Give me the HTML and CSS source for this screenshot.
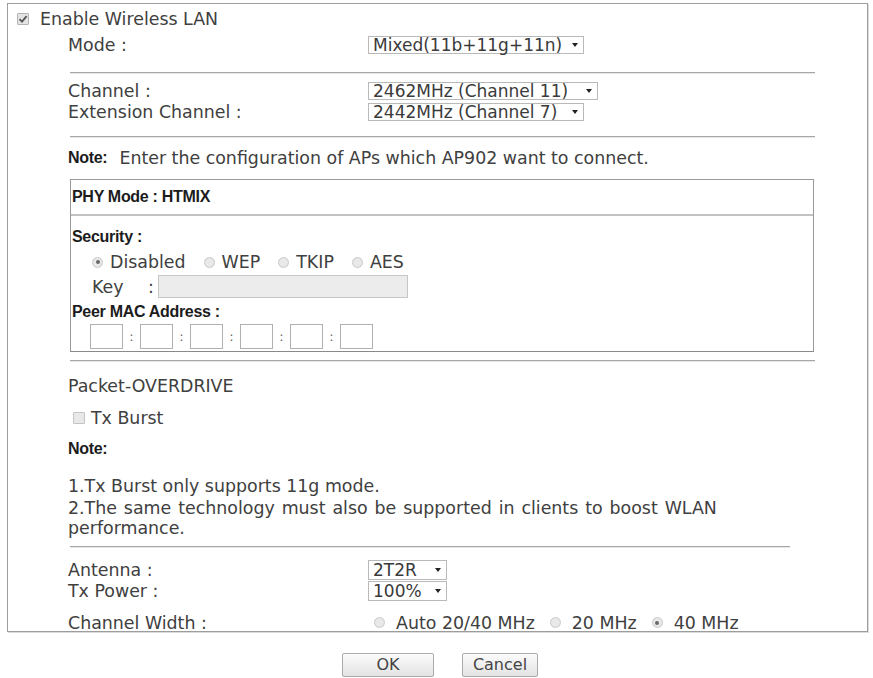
FILE: index.html
```html
<!DOCTYPE html>
<html>
<head>
<meta charset="utf-8">
<link rel="stylesheet" href="styles.css">
</head>
<body>
<div class="panel">
  <div class="enable">
    <span class="cb cb-on"><svg viewBox="0 0 12 12" width="12" height="12"><path d="M2.5 6.2 L5 8.6 L9.6 3.2" fill="none" stroke="#555" stroke-width="1.8"/></svg></span>
    <span>Enable Wireless LAN</span>
  </div>
  <div class="content">
    <div class="row row-mode"><span class="label">Mode :</span><span class="sel w-mode">Mixed(11b+11g+11n)<i class="arr"></i></span></div>
    <div class="hr hr-1"></div>
    <div class="row"><span class="label">Channel :</span><span class="sel w-ch">2462MHz (Channel 11)<i class="arr"></i></span></div>
    <div class="row"><span class="label">Extension Channel :</span><span class="sel w-ext">2442MHz (Channel 7)<i class="arr"></i></span></div>
    <div class="hr hr-2"></div>
    <div class="row note-row"><b class="bold">Note:</b><span class="note-text">Enter the configuration of APs which AP902 want to connect.</span></div>

    <div class="phy">
      <div class="phy-head"><b class="bold">PHY Mode : HTMIX</b></div>
      <div class="phy-body">
        <div class="sec-title"><b class="bold">Security :</b></div>
        <div class="radios">
          <span class="opt"><span class="rb rb-on"></span>Disabled</span>
          <span class="opt"><span class="rb"></span>WEP</span>
          <span class="opt"><span class="rb"></span>TKIP</span>
          <span class="opt"><span class="rb"></span>AES</span>
        </div>
        <div class="key-row"><span class="key-label">Key</span><span class="key-colon">:</span><span class="key-input"></span></div>
        <div class="peer-title"><b class="bold">Peer MAC Address :</b></div>
        <div class="mac-row">
          <span class="mac"></span><span class="mac-colon">:</span>
          <span class="mac"></span><span class="mac-colon">:</span>
          <span class="mac"></span><span class="mac-colon">:</span>
          <span class="mac"></span><span class="mac-colon">:</span>
          <span class="mac"></span><span class="mac-colon">:</span>
          <span class="mac"></span>
        </div>
      </div>
    </div>

    <div class="hr hr-3"></div>
    <div class="row pkt">Packet-OVERDRIVE</div>
    <div class="row burst"><span class="cb cb-off"></span>Tx Burst</div>
    <div class="row note2"><b class="bold">Note:</b></div>
    <div class="row item1">1.Tx Burst only supports 11g mode.</div>
    <div class="item2">2.The same technology must also be supported in clients to boost WLAN performance.</div>
    <div class="hr hr-4"></div>
    <div class="row ant"><span class="label">Antenna :</span><span class="sel w-small">2T2R<i class="arr"></i></span></div>
    <div class="row pow"><span class="label">Tx Power :</span><span class="sel w-small">100%<i class="arr"></i></span></div>
    <div class="row cw">
      <span class="label cw-label">Channel Width :</span>
      <span class="opt2"><span class="rb"></span>Auto 20/40 MHz</span>
      <span class="opt2"><span class="rb"></span>20 MHz</span>
      <span class="opt2"><span class="rb rb-on"></span>40 MHz</span>
    </div>
  </div>
</div>
<div class="buttons">
  <button class="btn btn-ok">OK</button>
  <button class="btn btn-cancel">Cancel</button>
</div>
</body>
</html>
```

FILE: styles.css
```css
html, body {
  margin: 0;
  padding: 0;
  background: #ffffff;
}
body {
  font-family: "DejaVu Sans", Verdana, sans-serif;
  font-size: 17.4px;
  color: #404040;
  width: 873px;
  height: 678px;
  overflow: hidden;
}
.bold {
  font-family: "Liberation Sans", Arial, sans-serif;
  font-weight: bold;
  font-size: 16px;
  color: #1c1c1c;
  letter-spacing: -0.3px;
}
.panel {
  margin: 3px 0 0 7px;
  width: 861px;
  height: 629px;
  box-sizing: border-box;
  border: 1px solid #9d9d9d;
  box-shadow: 1px 1px 0 #dcdcdc;
}
.enable {
  display: flex;
  align-items: center;
  height: 21px;
  margin-top: 4px;
  padding-left: 9px;
}
.cb {
  display: inline-block;
  width: 12px;
  height: 12px;
  box-sizing: border-box;
  border: 1px solid #b4b4b4;
  background: #e4e4e4;
  border-radius: 1px;
  flex: none;
}
.cb svg { display: block; margin: -1px; }
.cb-on { margin-right: 11px; }
.cb-off { margin-right: 6px; background: #e8e8e8; border-color: #c4c4c4; }
.content {
  padding-left: 60px;
  width: 747px;
}
.row {
  display: flex;
  align-items: center;
  height: 21px;
  white-space: nowrap;
}
.label {
  width: 300px;
  flex: none;
}
.row-mode { margin-top: 5px; }
.sel {
  display: inline-flex;
  align-items: center;
  justify-content: space-between;
  box-sizing: border-box;
  height: 18px;
  padding: 0 5px 0 4px;
  border: 1px solid #b9b9b9;
  background: #fff;
  line-height: 16px;
  font-size: 17px;
  color: #3a3a3a;
}
.arr {
  display: inline-block;
  width: 0;
  height: 0;
  border-left: 3px solid transparent;
  border-right: 3px solid transparent;
  border-top: 4px solid #222;
  margin-left: 8px;
}
.w-mode { width: 216px; }
.w-ch { width: 230px; }
.w-ext { width: 216px; }
.w-small { width: 79px; height: 20px; }
.hr {
  margin-left: 2px;
  width: 745px;
  height: 1px;
  border-top: 1px solid #a8a8a8;
  background: #e6e6e6;
}
.hr-1 { margin-top: 17px; margin-bottom: 6px; }
.hr-2 { margin-top: 14px; }
.note-row { margin-top: 9px; }
.note-text { margin-left: 12px; }
.phy {
  margin: 11px 0 0 2px;
  width: 744px;
  height: 173px;
  box-sizing: border-box;
  border: 1px solid #999;
  border-bottom-color: #8a8a8a;
}
.phy-head {
  height: 34px;
  display: flex;
  align-items: center;
  padding-left: 1px;
  border-bottom: 2px solid #c2c2c2;
}
.sec-title {
  margin-top: 10px;
  height: 21px;
  display: flex;
  align-items: center;
  padding-left: 1px;
}
.radios {
  margin-top: 5px;
  height: 20px;
  display: flex;
  align-items: center;
  padding-left: 21px;
}
.opt {
  display: inline-flex;
  align-items: center;
  margin-right: 18px;
}
.rb {
  display: inline-block;
  width: 11px;
  height: 11px;
  box-sizing: border-box;
  border-radius: 50%;
  border: 1px solid #c9c9c9;
  background: radial-gradient(circle, #e9e9e9 0 55%, #dadada 100%);
  margin-right: 7px;
  position: relative;
  flex: none;
}
.rb-on::after {
  content: "";
  position: absolute;
  left: 2.5px;
  top: 2.5px;
  width: 4px;
  height: 4px;
  border-radius: 50%;
  background: #6a6a6a;
}
.key-row {
  margin-top: 2px;
  height: 25px;
  display: flex;
  align-items: center;
  padding-left: 21px;
}
.key-label { width: 56px; }
.key-colon { width: 10px; }
.key-input {
  display: inline-block;
  width: 250px;
  height: 23px;
  box-sizing: border-box;
  border: 1px solid #c6c6c6;
  background: #ececec;
}
.peer-title {
  margin-top: 3px;
  height: 20px;
  display: flex;
  align-items: center;
  padding-left: 1px;
}
.mac-row {
  margin-top: 1px;
  height: 27px;
  display: flex;
  align-items: center;
  padding-left: 19px;
}
.mac {
  display: inline-block;
  width: 33px;
  height: 25px;
  box-sizing: border-box;
  border: 1px solid #b0b0b0;
  background: #fff;
}
.mac-colon {
  width: 17px;
  text-align: center;
  font-size: 13px;
  color: #666;
}
.hr-3 { margin-top: 8px; }
.pkt { margin-top: 13px; }
.burst { margin-top: 11px; padding-left: 5px; }
.note2 { margin-top: 10px; }
.item1 { margin-top: 16px; }
.item2 {
  margin-top: 2px;
  line-height: 20px;
  width: 700px;
  word-spacing: 1.4px;
}
.hr-4 { margin-top: 8px; width: 720px; }
.ant { margin-top: 11px; }
.cw { margin-top: 11px; }
.cw-label { width: 306px; }
.opt2 {
  display: inline-flex;
  align-items: center;
  margin-right: 15px;
}
.opt2 .rb { margin-right: 11px; }
.buttons {
  display: flex;
  justify-content: center;
  gap: 28px;
  margin-top: 21px;
  padding-left: 7px;
}
.btn {
  height: 24px;
  box-sizing: border-box;
  border: 1px solid #ababab;
  border-radius: 2px;
  background: linear-gradient(#fbfbfb, #e3e3e3);
  font-family: "DejaVu Sans", Verdana, sans-serif;
  font-size: 16px;
  color: #444;
  padding: 0;
  line-height: 20px;
}
.btn-ok { width: 92px; }
.btn-cancel { width: 76px; }
```
